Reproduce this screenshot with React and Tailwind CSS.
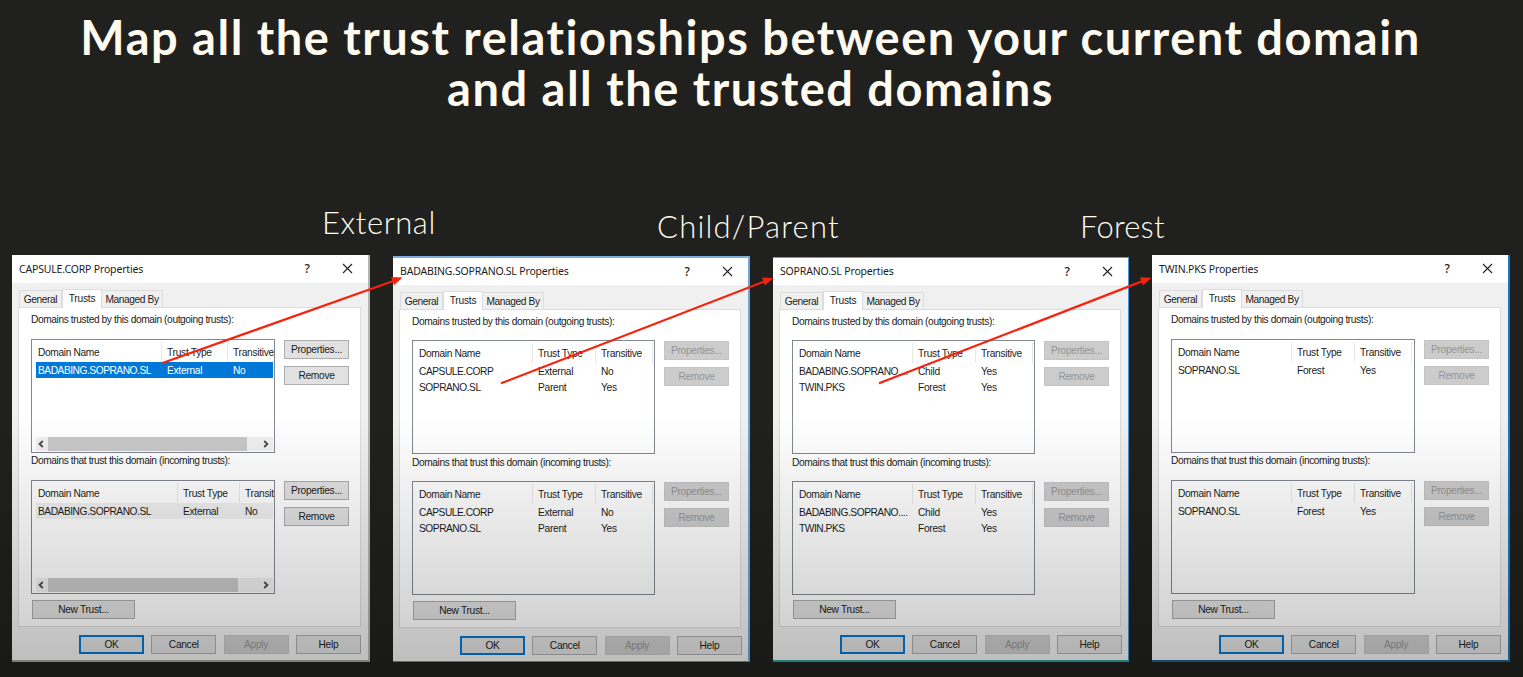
import React from "react";

const evenCols = "grid-cols-[116px_63px_57px]";

const windows = [
  {
    title: "CAPSULE.CORP Properties",
    frame: "w-[358px] mt-0 h-[407px] border-r-2 border-b-2 border-r-[#b4b4b4] border-b-[#a0a0a0]",
    bar: "h-[28px]",
    panel: "h-[320px] w-[343px]",
    label: "h-[27px]",
    listWidth: "w-[244px]",
    enabled: true,
    outgoing: {
      cols: "grid-cols-[126px_66px_45px]",
      rows: [["BADABING.SOPRANO.SL", "External", "No"]],
      row: "bg-[#0078d7] text-white",
      thumb: "w-[199px]",
    },
    incoming: {
      cols: "grid-cols-[142px_62px_33px]",
      rows: [["BADABING.SOPRANO.SL", "External", "No"]],
      row: "bg-[#f0f0f0]",
      thumb: "w-[190px]",
    },
  },
  {
    title: "BADABING.SOPRANO.SL Properties",
    frame: "w-[357px] mt-px h-[406px] border-t-2 border-r-2 border-b border-t-[#7eaedb] border-r-[#6aa5dd] border-b-[#4a90cc]",
    bar: "h-[27px]",
    panel: "h-[319px] w-[342px]",
    label: "h-[26px]",
    listWidth: "w-[243px]",
    outgoing: { cols: evenCols, rows: [["CAPSULE.CORP", "External", "No"], ["SOPRANO.SL", "Parent", "Yes"]] },
    incoming: { cols: evenCols, rows: [["CAPSULE.CORP", "External", "No"], ["SOPRANO.SL", "Parent", "Yes"]] },
  },
  {
    title: "SOPRANO.SL Properties",
    frame: "w-[356px] mt-[2px] h-[405px] border-t border-r border-b-2 border-t-[#4f9fe6] border-r-[#4796dc] border-b-[#2b9c9a]",
    bar: "h-[27px]",
    panel: "h-[318px] w-[342px]",
    label: "h-[26px]",
    listWidth: "w-[243px]",
    outgoing: { cols: evenCols, rows: [["BADABING.SOPRANO....", "Child", "Yes"], ["TWIN.PKS", "Forest", "Yes"]] },
    incoming: { cols: evenCols, rows: [["BADABING.SOPRANO....", "Child", "Yes"], ["TWIN.PKS", "Forest", "Yes"]] },
  },
  {
    title: "TWIN.PKS Properties",
    frame: "w-[358px] mt-0 h-[407px] border-r-2 border-b-2 border-r-[#1679c4] border-b-[#1d5f8a]",
    bar: "h-[28px]",
    panel: "h-[320px] w-[343px]",
    label: "h-[27px]",
    listWidth: "w-[244px]",
    outgoing: { cols: evenCols, rows: [["SOPRANO.SL", "Forest", "Yes"]] },
    incoming: { cols: evenCols, rows: [["SOPRANO.SL", "Forest", "Yes"]] },
  },
];

function Button({ children, disabled, primary, className = "w-[65px]" }) {
  const tone = primary
    ? "border-2 border-[#0078d7] bg-[#e1e1e1]"
    : disabled
      ? "border border-[#c4c4c4] bg-[#cccccc] text-[#949494]"
      : "border border-[#adadad] bg-[#e1e1e1]";
  return (
    <button className={`flex h-[19px] shrink-0 items-center justify-center tracking-[-0.3px] whitespace-nowrap ${tone} ${className}`}>
      {children}
    </button>
  );
}

function Chevron({ d }) {
  return (
    <svg width="6" height="8" viewBox="0 0 6 8" fill="none" stroke="#484848" strokeWidth="1.8">
      <path d={d} />
    </svg>
  );
}

function TrustList({ list, width }) {
  return (
    <div className={`flex h-[114px] shrink-0 flex-col overflow-hidden border border-[#828790] bg-white pl-[4px] ${width}`}>
      <div className={`mt-[2px] grid h-[20px] shrink-0 ${list.cols}`}>
        {["Domain Name", "Trust Type", "Transitive"].map((h, i) => (
          <span
            key={h}
            className={`pt-[2px] leading-[18px] whitespace-nowrap ${i < 2 || !list.thumb ? "border-r border-[#e8e8e8]" : ""} ${i ? "pl-[5px] tracking-[-0.28px]" : "pl-[2px] tracking-[-0.35px]"}`}
          >
            {h}
          </span>
        ))}
      </div>
      {list.rows.map((row) => (
        <div key={row[0]} className={`mr-px grid h-[15.5px] shrink-0 leading-[18px] ${list.cols} ${list.row || ""}`}>
          {row.map((cell, i) => (
            <span key={i} className={`whitespace-nowrap ${i ? "pl-[5px] tracking-[-0.28px]" : "pl-[2px] tracking-[-0.46px]"}`}>
              {cell}
            </span>
          ))}
        </div>
      ))}
      {list.thumb && (
        <div className="mt-auto mr-px mb-px flex h-[14px] shrink-0 items-center bg-[#f0f0f0]">
          <span className="flex w-[12px] justify-center pr-[3px]">
            <Chevron d="M4.8 1 1.6 4l3.2 3" />
          </span>
          <span className={`h-full bg-[#c8c8c8] ${list.thumb}`} />
          <span className="ml-auto pr-[4px]">
            <Chevron d="M1.2 1l3.2 3-3.2 3" />
          </span>
        </div>
      )}
    </div>
  );
}

function TrustGroup({ label, list, win }) {
  return (
    <div className="flex h-[141px] shrink-0 flex-col">
      <p className={`shrink-0 leading-[15px] whitespace-nowrap ${win.label}`}>{label}</p>
      <div className="flex gap-[9px]">
        <TrustList list={list} width={win.listWidth} />
        <div className="flex flex-col gap-[7px] pt-px">
          <Button disabled={!win.enabled}>Properties...</Button>
          <Button disabled={!win.enabled}>Remove</Button>
        </div>
      </div>
    </div>
  );
}

function PropertiesWindow({ win }) {
  return (
    <section
      className={`flex shrink-0 flex-col bg-[#f0f0f0] font-['Liberation_Sans',Arial,sans-serif] text-[10.2px] tracking-[-0.4px] text-[#1c1c1c] ${win.frame}`}
    >
      <header className={`flex shrink-0 items-center bg-white pl-[7px] font-['Noto_Sans','Open_Sans',sans-serif] text-[10.5px] ${win.bar}`}>
        <h2 className="pt-px tracking-[-0.17px] whitespace-nowrap">{win.title}</h2>
        <span className="ml-auto w-[10px] text-center text-[12px] font-medium">?</span>
        <svg className="mr-[15px] mb-px ml-[30px]" width="11" height="11" viewBox="0 0 11 11" stroke="#222" strokeWidth="1.1">
          <path d="M1 1l9 9M10 1l-9 9" />
        </svg>
      </header>
      <nav className="flex h-[24px] shrink-0 items-end pl-[7px]">
        <span className="flex h-[17px] w-[43px] items-center justify-center border border-b-0 border-[#dcdcdc] bg-[#f0f0f0] pt-px">General</span>
        <span className="z-10 -mb-px flex h-[19px] w-[40px] items-center justify-center border border-b-0 border-[#dcdcdc] bg-white pb-[1px] tracking-[-0.2px]">
          Trusts
        </span>
        <span className="flex h-[17px] w-[61px] items-center justify-center border border-b-0 border-l-0 border-[#dcdcdc] bg-[#f0f0f0] pt-px whitespace-nowrap">
          Managed By
        </span>
      </nav>
      <div className={`ml-[6px] flex shrink-0 flex-col border border-[#dcdcdc] bg-white pt-[4px] pl-[12px] ${win.panel}`}>
        <TrustGroup label="Domains trusted by this domain (outgoing trusts):" list={win.outgoing} win={win} />
        <TrustGroup label="Domains that trust this domain (incoming trusts):" list={win.incoming} win={win} />
        <Button className="mt-auto mb-[7px] ml-px w-[103px]">New Trust...</Button>
      </div>
      <footer className="flex gap-[7.3px] pt-[8px] pl-[67px]">
        <Button primary>OK</Button>
        <Button>Cancel</Button>
        <Button disabled>Apply</Button>
        <Button>Help</Button>
      </footer>
    </section>
  );
}

function Arrow({ x, y, tipX, tipY }) {
  return (
    <g>
      <line x1={x} y1={y} x2={tipX - 7} y2={tipY + 2.6} stroke="#f8210c" strokeWidth="2.2" />
      <path d={`M${tipX} ${tipY}l-11.5 -0.6 3 8.2z`} fill="#f8210c" />
    </g>
  );
}

export default function App() {
  return (
    <main className="relative h-[677px] w-[1523px] overflow-hidden bg-[#20201e] text-[#fffbf0]">
      <h1 className="h-[207px] pt-[12px] pr-[22px] text-center font-['Lato',sans-serif] text-[47px] leading-[51px] font-bold tracking-[1.5px]">
        Map all the trust relationships between your current domain
        <br />
        and all the trusted domains
      </h1>
      <div className="flex h-[48px] pl-[322px] font-['Lato',sans-serif] text-[31px] leading-[30px] font-light">
        <span className="w-[335px] tracking-[0.6px]">External</span>
        <span className="w-[423px] pt-[4px] tracking-[1.2px]">Child/Parent</span>
        <span className="pt-[4px] tracking-[0.2px]">Forest</span>
      </div>
      <div className="flex items-start gap-[23px] pl-[12px]">
        {windows.map((win) => (
          <PropertiesWindow key={win.title} win={win} />
        ))}
      </div>
      <div className="pointer-events-none absolute inset-x-0 bottom-0 z-20 h-[262px] bg-linear-to-b from-black/0 to-black/22" />
      <svg className="pointer-events-none absolute inset-0 z-30" width="1523" height="677" viewBox="0 0 1523 677">
        <Arrow x={162.5} y={363} tipX={402.5} tipY={277.6} />
        <Arrow x={501} y={383.3} tipX={773.5} tipY={278} />
        <Arrow x={879} y={383.3} tipX={1151.5} tipY={277.8} />
      </svg>
    </main>
  );
}
